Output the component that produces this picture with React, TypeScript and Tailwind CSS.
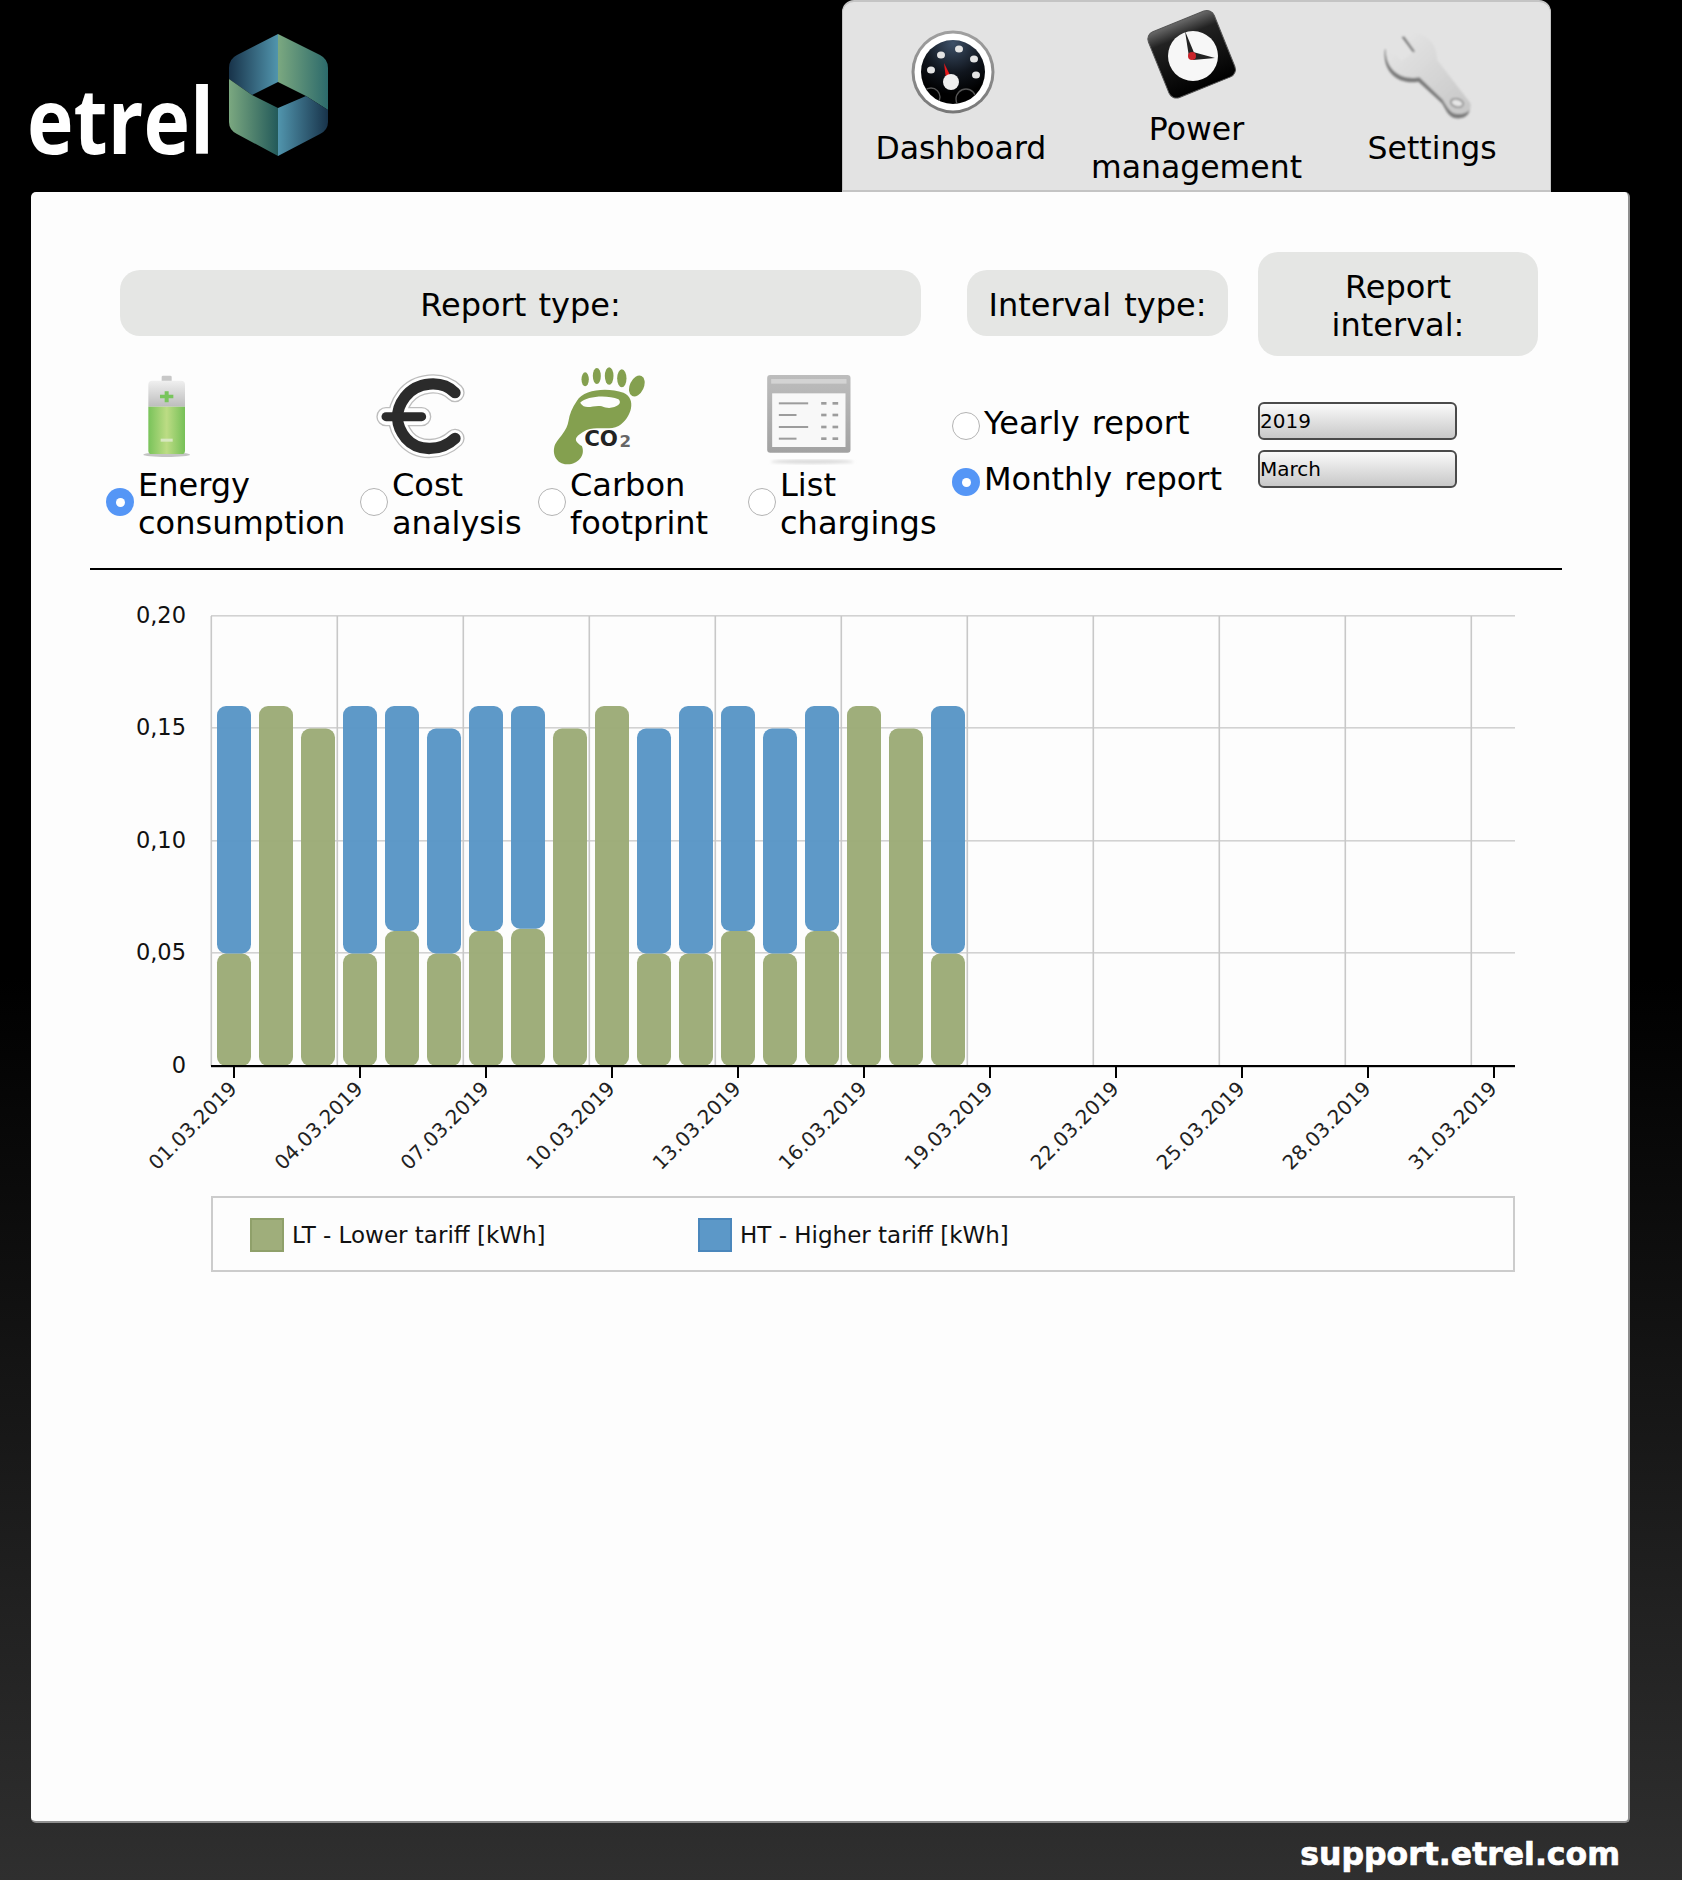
const bars = [
  [0.05, 0.11], [0.16, 0], [0.15, 0], [0.05, 0.11], [0.06, 0.1], [0.05, 0.1],
  [0.06, 0.1], [0.061, 0.099], [0.15, 0], [0.16, 0], [0.05, 0.1], [0.05, 0.11],
  [0.06, 0.1], [0.05, 0.1], [0.06, 0.1], [0.16, 0], [0.15, 0], [0.05, 0.11],
];
const dates = ["01", "04", "07", "10", "13", "16", "19", "22", "25", "28", "31"];
const yLabels = [["0,20", 616], ["0,15", 728], ["0,10", 841], ["0,05", 953], ["0", 1066]] as const;
const BASE = 1066;
const SCALE = 2250;

function Logo() {
  return (
    <svg width="340" height="192" viewBox="0 0 340 192" className="shrink-0">
      <defs>
        <linearGradient id="ul"><stop offset="0" stopColor="#18334a" /><stop offset="1" stopColor="#5195ad" /></linearGradient>
        <linearGradient id="ur"><stop offset="0" stopColor="#7ba880" /><stop offset="1" stopColor="#2c6a6b" /></linearGradient>
        <linearGradient id="ll"><stop offset="0" stopColor="#7ba880" /><stop offset="1" stopColor="#235a5a" /></linearGradient>
        <linearGradient id="lr"><stop offset="0" stopColor="#5195ad" /><stop offset="1" stopColor="#18334a" /></linearGradient>
      </defs>
      <text x="27" y="154" textLength="187" lengthAdjust="spacingAndGlyphs" fill="#fff" fontSize="92" fontWeight="700" fontFamily="'Open Sans', sans-serif">etrel</text>
      <path d="M278 34V82L252 95L229 79V68Q229 59 237 55Z" fill="url(#ul)" />
      <path d="M278 34L320 55Q328 59 328 68V110L306 96L278 82Z" fill="url(#ur)" />
      <path d="M229 79L252 95L278 108V156L237 134Q229 130 229 122Z" fill="url(#ll)" />
      <path d="M278 108L306 96L328 110V122Q328 130 320 134L278 156Z" fill="url(#lr)" />
    </svg>
  );
}

function GaugeIcon() {
  return (
    <svg width="90" height="90" viewBox="0 0 90 90" className="mt-[25px] mr-[16px]">
      <defs>
        <radialGradient id="gface" cx="0.5" cy="0.05" r="0.8"><stop offset="0" stopColor="#3d5068" /><stop offset="0.6" stopColor="#10151d" /><stop offset="1" stopColor="#000" /></radialGradient>
        <linearGradient id="gring" x1="0" y1="0" x2="0" y2="1"><stop offset="0" stopColor="#a0a0a0" /><stop offset="1" stopColor="#777" /></linearGradient>
        <clipPath id="gclip"><circle cx="45" cy="45" r="32" /></clipPath>
      </defs>
      <circle cx="45" cy="45" r="41.5" fill="url(#gring)" />
      <circle cx="45" cy="45" r="38.5" fill="#fff" />
      <circle cx="45" cy="45" r="32" fill="url(#gface)" />
      {[[23, 43], [33, 28], [51, 22], [66, 32], [68, 48]].map(([x, y]) => (
        <ellipse key={x} cx={x} cy={y} rx="4" ry="3.6" fill="#e4e4e4" />
      ))}
      <g clipPath="url(#gclip)" fill="none" stroke="#555" strokeWidth="1.4">
        <circle cx="23" cy="70" r="9" />
        <circle cx="58" cy="72" r="10" />
      </g>
      <path d="M36 36L43 50L38 52Z" fill="#e5171a" />
      <circle cx="43" cy="55" r="8" fill="#efefef" />
    </svg>
  );
}

function ClockIcon() {
  return (
    <svg width="96" height="96" viewBox="0 0 96 96" className="mt-[4px] mr-[11px]">
      <defs>
        <linearGradient id="cbody" x1="0" y1="0" x2="0" y2="1"><stop offset="0" stopColor="#6a6a6a" /><stop offset="0.22" stopColor="#222" /><stop offset="1" stopColor="#000" /></linearGradient>
      </defs>
      <rect x="13" y="13" width="71" height="71" rx="8" fill="url(#cbody)" stroke="#555" transform="rotate(-22 48 48)" />
      <circle cx="50" cy="50" r="25" fill="#f7f7f7" />
      <path d="M42 25L52 49L46 51Z" fill="#222" />
      <path d="M50 46L72 52L50 54Z" fill="#222" />
      <circle cx="49" cy="50" r="4" fill="#c9232a" />
    </svg>
  );
}

function WrenchIcon() {
  return (
    <svg width="110" height="110" viewBox="0 0 330 330" className="mt-[16px] mr-[12px]">
      <defs>
        <linearGradient id="wfill" x1="0" y1="0" x2="1" y2="1"><stop offset="0" stopColor="#e8e8e8" /><stop offset="1" stopColor="#c6c6c6" /></linearGradient>
        <filter id="wblur"><feGaussianBlur stdDeviation="3" /></filter>
      </defs>
      <g filter="url(#wblur)">
        <path d="M95 50C150 30 200 70 198 125L298 255C305 285 280 300 250 292C232 285 225 262 215 248L145 184C90 194 35 160 45 85L92 128L132 100Z" fill="#7a7a7a" transform="translate(-3 7)" />
        <path d="M95 48C150 30 200 70 198 125L298 255C305 280 280 292 252 287C235 282 225 262 215 245L145 178C90 188 38 155 45 85L92 128L132 100Z" fill="url(#wfill)" />
        <ellipse cx="258" cy="255" rx="19" ry="12" fill="#e6e6e6" stroke="#8e8e8e" strokeWidth="5" transform="rotate(15 258 255)" />
      </g>
    </svg>
  );
}

function BatteryIcon() {
  return (
    <svg width="54" height="85" viewBox="30 40 162 255" className="ml-[34px]">
      <defs>
        <linearGradient id="bgreen"><stop offset="0" stopColor="#79c35a" /><stop offset="0.5" stopColor="#bcdc84" /><stop offset="1" stopColor="#76c057" /></linearGradient>
        <linearGradient id="bgray" x1="0" y1="0" x2="0" y2="1"><stop offset="0" stopColor="#f0f0f0" /><stop offset="1" stopColor="#bdbdbd" /></linearGradient>
      </defs>
      <ellipse cx="110" cy="282" rx="70" ry="7" fill="#c4c4c4" />
      <rect x="95" y="45" width="30" height="18" rx="4" fill="#c8c8c8" />
      <path d="M55 138V72Q55 60 67 60H153Q165 60 165 72V138Z" fill="url(#bgray)" />
      <path d="M55 138H165V270Q165 280 155 280H65Q55 280 55 270Z" fill="url(#bgreen)" />
      <path d="M104 92H116V102H130V113H116V125H104V113H90V102H104Z" fill="#78c55c" />
      <rect x="92" y="234" width="36" height="9" fill="#d8e8c0" />
    </svg>
  );
}

function EuroIcon() {
  const arc = "M975 95C935 55 860 62 825 108C793 150 797 195 828 232C865 275 935 270 975 232";
  return (
    <svg width="94" height="90" viewBox="735 30 282 270" className="ml-[15px]">
      <g fill="none" strokeLinecap="round">
        <path d={`${arc}M768 167H875`} stroke="#bdbdbd" strokeWidth="58" />
        <path d={`${arc}M768 167H875`} stroke="#fff" strokeWidth="50" />
        <path d={arc} stroke="#2b2b2b" strokeWidth="34" />
        <path d="M768 167H875" stroke="#2b2b2b" strokeWidth="27" />
      </g>
    </svg>
  );
}

function FootIcon() {
  return (
    <svg width="107" height="110" viewBox="0 0 320 330" className="ml-[2px]">
      {[[135, 55, 11, 21], [170, 45, 12, 24], [207, 45, 13, 26], [245, 52, 14, 27]].map(([x, y, rx, ry]) => (
        <ellipse key={x} cx={x} cy={y} rx={rx} ry={ry} fill="#84a04f" />
      ))}
      <ellipse cx="290" cy="75" rx="21" ry="33" fill="#84a04f" transform="rotate(25 290 75)" />
      <path d="M110 120C130 85 200 78 250 95C290 112 275 170 235 195C200 212 160 190 130 212C108 226 95 236 125 255C138 285 110 312 80 310C50 310 33 280 45 250C60 225 80 210 85 180C88 160 96 140 110 120Z" fill="#84a04f" />
      <path d="M120 125C140 105 200 100 235 115C252 130 215 150 185 136C160 130 135 150 120 125Z" fill="#fdfdfd" />
      <text x="132" y="254" fontSize="64" fontWeight="700" fill="#222" fontFamily="'DejaVu Sans', sans-serif">CO</text>
      <text x="238" y="258" fontSize="50" fontWeight="700" fill="#666" fontFamily="'DejaVu Sans', sans-serif">2</text>
    </svg>
  );
}

function TableIcon() {
  return (
    <svg width="107" height="110" viewBox="0 0 320 330" className="ml-[9px]">
      <defs>
        <linearGradient id="tbody" x1="0" y1="0" x2="0" y2="1"><stop offset="0" stopColor="#bdbdbd" /><stop offset="1" stopColor="#a2a2a2" /></linearGradient>
        <filter id="tblur"><feGaussianBlur stdDeviation="4" /></filter>
      </defs>
      <ellipse cx="165" cy="302" rx="125" ry="6" fill="#d8d8d8" filter="url(#tblur)" />
      <rect x="30" y="42" width="250" height="233" rx="9" fill="url(#tbody)" />
      <rect x="42" y="54" width="226" height="14" fill="#d3d3d3" />
      <rect x="45" y="97" width="220" height="161" fill="#f8f8f8" />
      {[[127, 153], [162, 118], [198, 153], [233, 118]].map(([y, x2]) => (
        <g key={y} fill="#9c9c9c">
          <rect x="65" y={y - 3} width={x2 - 65} height="6" />
          <rect x="192" y={y - 4} width="16" height="8" />
          <rect x="226" y={y - 4} width="17" height="8" />
        </g>
      ))}
    </svg>
  );
}

function Radio({ checked }: { checked?: boolean }) {
  return checked ? (
    <span className="w-[28px] h-[28px] rounded-full bg-[#5596f6] flex items-center justify-center shrink-0">
      <span className="w-[9px] h-[9px] rounded-full bg-white" />
    </span>
  ) : (
    <span className="w-[28px] h-[28px] rounded-full bg-white border border-[#b4b4b4] shrink-0" />
  );
}

function ReportOption({ width, icon, label, checked }: { width: string; icon: React.ReactNode; label: string[]; checked?: boolean }) {
  return (
    <div className={`${width} shrink-0`}>
      <div className="h-[100px] flex items-center">{icon}</div>
      <div className="flex items-center gap-[4px]">
        <span className="-mt-[4px] flex"><Radio checked={checked} /></span>
        <div className="text-[32px] leading-[38px] text-black">
          {label.map((l) => (
            <div key={l}>{l}</div>
          ))}
        </div>
      </div>
    </div>
  );
}

function Chart() {
  return (
    <svg width="1410" height="606" viewBox="120 590 1410 606" className="ml-[89px] block">
      {[616, 728, 841, 953].map((y) => (
        <rect key={y} x="211" y={y - 1} width="1304" height="1.6" fill="#d2d2d2" />
      ))}
      {dates.map((_, i) => (
        <rect key={i} x={210.5 + 126 * i} y="616" width="1.6" height="450" fill="#c8c8c8" />
      ))}
      {bars.map(([lt, ht], i) => {
        const x = 217 + 42 * i;
        const ltH = lt * SCALE;
        const htH = ht * SCALE;
        return (
          <g key={i} fillOpacity="0.96">
            <rect x={x} y={BASE - ltH} width="34" height={ltH} rx="9" fill="#9bab76" />
            {ht > 0 && <rect x={x} y={BASE - ltH - htH} width="34" height={htH} rx="9" fill="#5795c6" />}
          </g>
        );
      })}
      <rect x="211" y="1065" width="1304" height="2.2" fill="#000" />
      {dates.map((d, i) => {
        const x = 233 + 126 * i;
        return (
          <g key={d}>
            <rect x={x} y="1066" width="2" height="12" fill="#000" />
            <text x={x + 5} y="1090" textAnchor="end" fontSize="20" fill="#222" transform={`rotate(-45 ${x + 5} 1090)`}>
              {d}.03.2019
            </text>
          </g>
        );
      })}
      {yLabels.map(([t, y]) => (
        <text key={t} x="186" y={y + 7} textAnchor="end" fontSize="22.5" fill="#111">
          {t}
        </text>
      ))}
    </svg>
  );
}

export default function App() {
  return (
    <div className="w-[1682px] h-[1880px] flex flex-col bg-[linear-gradient(to_bottom,#000_0%,#000_52%,#2f2f2f_100%)] font-['DejaVu_Sans',sans-serif] overflow-hidden">
      <header className="h-[192px] flex shrink-0">
        <Logo />
        <nav className="ml-[502px] w-[709px] h-[192px] grid grid-cols-3 bg-[#e3e3e3] rounded-t-[12px] border-x border-t-2 border-b-2 border-[#c4c4c4] text-[31.5px] leading-[38px] text-black text-center">
          <div className="flex flex-col items-center">
            <div className="h-[108px]"><GaugeIcon /></div>
            <div className="h-[76px] flex items-center">Dashboard</div>
          </div>
          <div className="flex flex-col items-center">
            <div className="h-[108px]"><ClockIcon /></div>
            <div className="h-[76px] flex items-center">Power<br />management</div>
          </div>
          <div className="flex flex-col items-center">
            <div className="h-[108px]"><WrenchIcon /></div>
            <div className="h-[76px] flex items-center">Settings</div>
          </div>
        </nav>
      </header>

      <main className="ml-[31px] w-[1599px] h-[1631px] shrink-0 bg-[#fdfdfd] rounded-[5px] border-r-2 border-b-2 border-[#8f8f8f] pt-[60px]">
        <div className="flex ml-[59px]">
          <div className="w-[861px]">
            <div className="ml-[30px] mt-[18px] w-[801px] h-[66px] pt-[4px] rounded-[20px] bg-[#e5e6e4] flex items-center justify-center text-[32px] [word-spacing:2px] text-black">
              Report type:
            </div>
            <div className="flex ml-[16px] mt-[30px]">
              <ReportOption width="w-[254px]" icon={<BatteryIcon />} label={["Energy", "consumption"]} checked />
              <ReportOption width="w-[178px]" icon={<EuroIcon />} label={["Cost", "analysis"]} />
              <ReportOption width="w-[210px]" icon={<FootIcon />} label={["Carbon", "footprint"]} />
              <ReportOption width="w-[200px]" icon={<TableIcon />} label={["List", "chargings"]} />
            </div>
          </div>
          <div className="w-[307px]">
            <div className="ml-[16px] mt-[18px] w-[261px] h-[66px] pt-[4px] rounded-[20px] bg-[#e5e6e4] flex items-center justify-center text-[32px] [word-spacing:3px] text-black">
              Interval type:
            </div>
            <div className="ml-[1px] mt-[68px] flex flex-col gap-[18px] text-[32px] leading-[38px] text-black [word-spacing:2px]">
              <div className="flex items-center gap-[4px]">
                <span className="mt-[6px] flex"><Radio /></span>
                Yearly report
              </div>
              <div className="flex items-center gap-[4px]">
                <span className="mt-[6px] flex"><Radio checked /></span>
                Monthly report
              </div>
            </div>
          </div>
          <div className="w-[280px]">
            <div className="w-[280px] h-[104px] pt-[4px] rounded-[20px] bg-[#e5e6e4] flex items-center justify-center text-center text-[32px] leading-[38px] text-black">
              Report<br />interval:
            </div>
            <div className="mt-[46px] flex flex-col gap-[10px]">
              <select defaultValue="2019" className="appearance-none w-[199px] h-[38px] rounded-[6px] border-2 border-[#4a4a4a] bg-[linear-gradient(to_bottom,#fafafa,#c8c8c8)] text-[20px] text-black">
                <option>2019</option>
              </select>
              <select defaultValue="March" className="appearance-none w-[199px] h-[38px] rounded-[6px] border-2 border-[#4a4a4a] bg-[linear-gradient(to_bottom,#fafafa,#c8c8c8)] text-[20px] text-black">
                <option>March</option>
              </select>
            </div>
          </div>
        </div>

        <div className="ml-[59px] mt-[26px] w-[1472px] h-[2px] bg-black" />

        <div className="mt-[20px]">
          <Chart />
          <div className="ml-[180px] w-[1304px] h-[76px] pt-[2px] border-2 border-[#cccccc] flex items-center pl-[37px] text-[23px] text-[#111]">
            <div className="w-[448px] flex items-center gap-[8px]">
              <span className="w-[34px] h-[34px] bg-[#9fae7b] border-2 border-[#8fa06a]" />
              LT - Lower tariff [kWh]
            </div>
            <div className="flex items-center gap-[8px]">
              <span className="w-[34px] h-[34px] bg-[#5c98c8] border-2 border-[#4a87bc]" />
              HT - Higher tariff [kWh]
            </div>
          </div>
        </div>
      </main>

      <footer className="flex justify-end items-center h-[57px] pt-[6px] pr-[62px] text-[31.5px] font-bold text-white [-webkit-text-stroke:0.7px_white]">
        support.etrel.com
      </footer>
    </div>
  );
}
